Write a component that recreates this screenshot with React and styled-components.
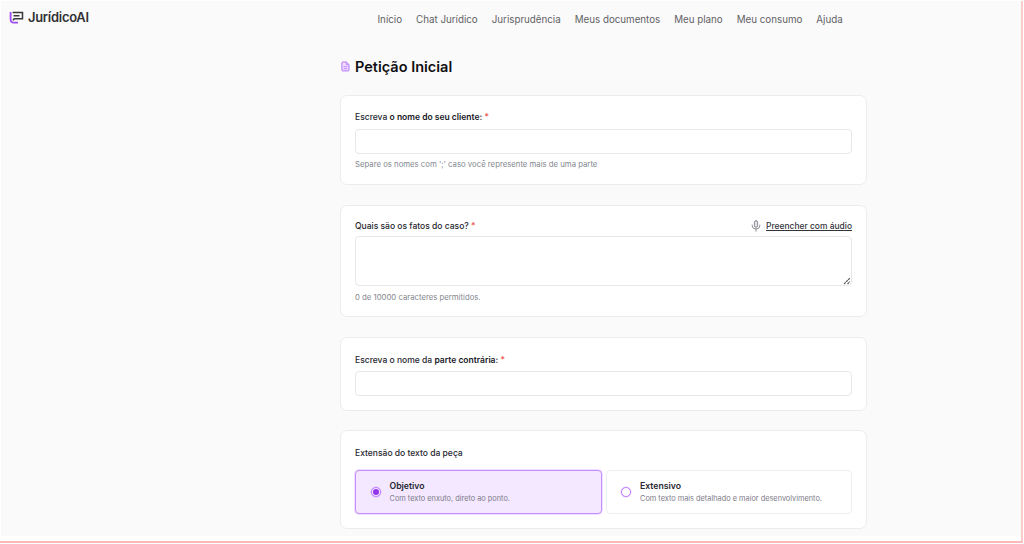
import React from "react";
import styled, { createGlobalStyle } from "styled-components";

const GlobalStyle = createGlobalStyle`
  * { box-sizing: border-box; }
  body {
    margin: 0;
    background: #fff;
    font-family: Inter, "Liberation Sans", sans-serif;
    color: #27272a;
    overflow: hidden;
  }
`;

const Frame = styled.div`
  width: 1023px;
  height: 542px;
  margin-top: 1px;
  padding-left: 1px;
  border-right: 2px solid #fdcaca;
  border-bottom: 2px solid #fdb9b9;
`;

const Page = styled.div`
  height: 535px;
  background: #fafafa;
`;

const Header = styled.header`
  display: flex;
  align-items: center;
  height: 36px;
  padding-left: 8px;
`;

const Brand = styled.div`
  display: flex;
  align-items: center;
  width: 368.5px;
  gap: 4px;
  margin-top: -3px;
  font-size: 12.9px;
  font-weight: 600;
  letter-spacing: -0.25px;
  line-height: 16px;
  color: #303033;
`;

const Nav = styled.nav`
  display: flex;
  gap: 14px;
  margin-top: 2px;
  font-size: 9.77px;
  line-height: 14px;
  color: #626265;
  white-space: nowrap;
`;

const Main = styled.main`
  width: 527px;
  margin-left: 339px;
`;

const Title = styled.h1`
  display: flex;
  align-items: center;
  gap: 5px;
  height: 20px;
  margin: 19px 0 19px;
  padding: 1px 0 0 1px;
  font-size: 14.5px;
  font-weight: 600;
  color: #101012;
`;

const Card = styled.section`
  height: ${(p) => p.$height}px;
  margin-bottom: ${(p) => p.$after || 20}px;
  padding: ${(p) => p.$top}px 14px 0;
  border: 1px solid #ececee;
  border-radius: 7px;
  background: #fff;
`;

const LabelRow = styled.div`
  display: flex;
  align-items: center;
  justify-content: space-between;
  height: 12px;
`;

const Label = styled.label`
  font-size: 8.53px;
  line-height: 12px;
  font-weight: 500;
  color: #27272f;
  white-space: nowrap;

  b { font-weight: 600; color: #18181f; }
`;

const Required = styled.span`
  color: #f25555;
`;

const Input = styled.input`
  display: block;
  width: 100%;
  height: 25px;
  margin-top: ${(p) => p.$gap}px;
  border: 1px solid #e8e8ea;
  border-radius: 4px;
  background: #fff;
  outline: none;
`;

const AreaWrap = styled.div`
  position: relative;
  margin: 4px 0 5px;
`;

const TextArea = styled.textarea`
  display: block;
  width: 100%;
  height: 50px;
  border: 1px solid #e8e8ea;
  border-radius: 4px;
  background: #fff;
  resize: none;
  outline: none;
`;

const Grip = styled.svg`
  position: absolute;
  right: 1px;
  bottom: 1px;
`;

const Hint = styled.p`
  margin: ${(p) => p.$gap ?? 4}px 0 0;
  font-size: 7.76px;
  line-height: 12px;
  color: #82868e;
  white-space: nowrap;
`;

const AudioLink = styled.a`
  display: flex;
  align-items: center;
  gap: 5px;
  font-size: 8.45px;
  line-height: 12px;
  font-weight: 500;
  color: #34343c;

  span { text-decoration: underline; text-underline-offset: 1px; }
`;

const Options = styled.div`
  display: grid;
  grid-template-columns: 1fr 1fr;
  gap: 4px;
  margin-top: 11px;
`;

const Option = styled.div`
  display: flex;
  align-items: center;
  gap: 9px;
  height: 44px;
  padding-left: ${(p) => (p.$on ? 14.5 : 14.5)}px;
  border: 1px solid ${(p) => (p.$on ? "#c48dfb" : "#eeeeef")};
  border-radius: 4px;
  background: ${(p) => (p.$on ? "#f3e8ff" : "#fff")};
  box-shadow: ${(p) => (p.$on ? "0 0 0 1px rgba(192, 132, 252, 0.25)" : "none")};
`;

const Radio = styled.span`
  display: grid;
  place-items: center;
  width: 10px;
  height: 10px;
  border: 1px solid #c07ffc;
  border-radius: 50%;
  background: ${(p) => (p.$on ? "#f3e8ff" : "#fff")};
  box-shadow: 0 0 0 0.5px rgba(192, 127, 252, 0.4);

  &::after {
    content: "";
    width: 6px;
    height: 6px;
    border-radius: 50%;
    background: ${(p) => (p.$on ? "#9333ea" : "transparent")};
  }
`;

const OptionTitle = styled.div`
  padding-top: 1px;
  font-size: 8.7px;
  line-height: 12px;
  font-weight: 600;
  color: #27272f;
`;

const OptionText = styled.div`
  padding-top: 1px;
  font-size: 7.36px;
  line-height: 12px;
  color: #7d7b88;
  white-space: nowrap;
`;

const LINKS = ["Início", "Chat Jurídico", "Jurisprudência", "Meus documentos", "Meu plano", "Meu consumo", "Ajuda"];

function Logo() {
  return (
    <svg width="15" height="13" viewBox="0 0 15 13" fill="none" strokeWidth="1.8">
      <path d="M1.6 1V8.2Q1.6 11.7 5 11.7H9" stroke="#a04af8" />
      <path d="M3.6 1.6H13.5V7.8H6Q4.2 7.8 4.2 9.4M4.5 4.7H10.5" stroke="#39393c" strokeWidth="1.5" />
    </svg>
  );
}

function DocIcon() {
  return (
    <svg width="9" height="11" viewBox="0 0 9 11" fill="none" stroke="#b673fa" strokeLinejoin="round">
      <path d="M1.7 1H5.4L8 3.6V9.1Q8 9.9 7.2 9.9H1.7Q.9 9.9.9 9.1V1.8Q.9 1 1.7 1Z" fill="#f0e0ff" />
      <path d="M5.3 1.2V3.8H7.8M2.5 5.7H6.4M2.5 7.7H6.4" strokeWidth=".8" />
    </svg>
  );
}

function MicIcon() {
  return (
    <svg width="10" height="12" viewBox="0 0 10 12" fill="none" stroke="#74747c" strokeWidth=".8" strokeLinecap="round">
      <rect x="3.4" y=".7" width="3.2" height="6.6" rx="1.6" fill="#e4e4e8" />
      <path d="M1.2 5.1V5.8Q1.2 9 5 9T8.8 5.8V5.1M5 9V11.2" />
    </svg>
  );
}

export default function App() {
  return (
    <>
      <GlobalStyle />
      <Frame>
        <Page>
          <Header>
            <Brand><Logo />JurídicoAI</Brand>
            <Nav>{LINKS.map((text) => <span key={text}>{text}</span>)}</Nav>
          </Header>
          <Main>
            <Title><DocIcon />Petição Inicial</Title>
            <Card $height={90} $top={15}>
              <LabelRow><Label>Escreva <b>o nome do seu cliente:</b> <Required>*</Required></Label></LabelRow>
              <Input $gap={6} />
              <Hint>Separe os nomes com ';' caso você represente mais de uma parte</Hint>
            </Card>
            <Card $height={112} $top={14}>
              <LabelRow>
                <Label>Quais são os fatos do caso? <Required>*</Required></Label>
                <AudioLink><MicIcon /><span>Preencher com áudio</span></AudioLink>
              </LabelRow>
              <AreaWrap>
                <TextArea />
                <Grip width="8" height="8" viewBox="0 0 8 8" stroke="#5c5c60" strokeWidth="1.2" strokeDasharray="2.4 .5">
                  <path d="M1 7L7 1M4.5 7L7 4.5" />
                </Grip>
              </AreaWrap>
              <Hint $gap={0}>0 de 10000 caracteres permitidos.</Hint>
            </Card>
            <Card $height={74} $top={16} $after={19}>
              <LabelRow><Label>Escreva o nome da <b>parte contrária:</b> <Required>*</Required></Label></LabelRow>
              <Input $gap={5} />
            </Card>
            <Card $height={99} $top={16}>
              <LabelRow><Label>Extensão do texto da peça</Label></LabelRow>
              <Options>
                <Option $on>
                  <Radio $on />
                  <div>
                    <OptionTitle>Objetivo</OptionTitle>
                    <OptionText>Com texto enxuto, direto ao ponto.</OptionText>
                  </div>
                </Option>
                <Option>
                  <Radio />
                  <div>
                    <OptionTitle>Extensivo</OptionTitle>
                    <OptionText>Com texto mais detalhado e maior desenvolvimento.</OptionText>
                  </div>
                </Option>
              </Options>
            </Card>
          </Main>
        </Page>
      </Frame>
    </>
  );
}
